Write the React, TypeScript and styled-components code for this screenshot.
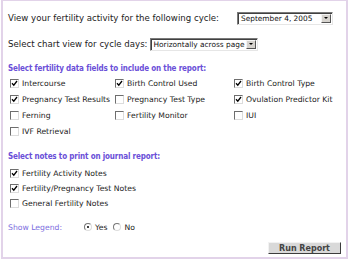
import React from 'react';
import styled, { createGlobalStyle } from 'styled-components';

const GlobalStyle = createGlobalStyle`
  html, body {
    margin: 0;
    padding: 0;
    background: #ffffff;
  }
  body {
    font-family: "DejaVu Sans", Verdana, sans-serif;
    font-size: 7.7px;
    color: #222222;
  }
`;

const Panel = styled.div`
  box-sizing: border-box;
  width: 347px;
  height: 259px;
  margin: 0 0 0 1px;
  border: 2px solid #e2d3e9;
  border-top-width: 1px;
  padding: 10px 5px 0 5px;
  display: flex;
  flex-direction: column;
`;

const Row = styled.div<{ $gap?: number; $mt?: number }>`
  display: flex;
  align-items: center;
  gap: ${(p) => p.$gap ?? 2}px;
  margin-top: ${(p) => p.$mt ?? 0}px;
  height: 14px;
  font-size: 8.6px;
`;

const Label = styled.span<{ $width?: number }>`
  white-space: nowrap;
  ${(p) => (p.$width ? `width: ${p.$width}px;` : '')}
`;

const SelectBox = styled.div<{ $width: number }>`
  box-sizing: border-box;
  width: ${(p) => p.$width}px;
  height: 13px;
  display: flex;
  align-items: center;
  justify-content: space-between;
  background: #ffffff;
  border: 1px solid;
  border-color: #7a7a7a #e6e6e6 #e6e6e6 #7a7a7a;
  box-shadow: inset 1px 1px 0 #404040;
  padding: 0 1px 0 3px;
  font-size: 7.4px;
  white-space: nowrap;
  overflow: hidden;
  color: #111;
`;

const ArrowBtn = styled.span`
  box-sizing: border-box;
  flex: none;
  width: 10px;
  height: 9px;
  background: #d6d3ce;
  border: 1px solid;
  border-color: #f4f4f4 #555 #555 #f4f4f4;
  display: flex;
  align-items: center;
  justify-content: center;
  &::after {
    content: '';
    border-left: 2px solid transparent;
    border-right: 2px solid transparent;
    border-top: 2px solid #000;
  }
`;

const Heading = styled.div<{ $mt: number }>`
  margin-top: ${(p) => p.$mt}px;
  color: #6a4fd8;
  font-family: "DejaVu Sans Condensed", "DejaVu Sans", sans-serif;
  font-weight: bold;
  font-size: 8px;
  letter-spacing: -0.15px;
  white-space: nowrap;
`;

const FieldGrid = styled.div`
  display: grid;
  grid-template-columns: 105px 119px 1fr;
  grid-auto-rows: 16px;
  margin-top: 2px;
  padding-left: 2px;
`;

const NotesList = styled.div`
  display: grid;
  grid-auto-rows: 15px;
  margin-top: 5px;
  padding-left: 2px;
`;

const Option = styled.label`
  display: flex;
  align-items: center;
  gap: 3px;
  white-space: nowrap;
`;

const Box = styled.span`
  box-sizing: border-box;
  flex: none;
  width: 9px;
  height: 9px;
  border: 1px solid;
  border-color: #6e6e6e #dcdcdc #dcdcdc #6e6e6e;
  background: #ffffff;
  display: flex;
  align-items: center;
  justify-content: center;
`;

const LegendRow = styled.div`
  display: flex;
  align-items: center;
  margin-top: 9px;
  height: 14px;
`;

const LegendLabel = styled.span`
  color: #7d6ee0;
  width: 76px;
`;

const Radio = styled.span<{ $on?: boolean }>`
  box-sizing: border-box;
  width: 8px;
  height: 8px;
  border-radius: 50%;
  border: 1px solid;
  border-color: #777 #ddd #ddd #777;
  background: #fff;
  display: flex;
  align-items: center;
  justify-content: center;
  margin-right: 3px;
  &::after {
    content: '';
    width: 2px;
    height: 2px;
    border-radius: 50%;
    background: ${(p) => (p.$on ? '#000' : 'transparent')};
  }
`;

const RadioText = styled.span`
  margin-right: 6px;
`;

const Footer = styled.div`
  display: flex;
  justify-content: flex-end;
  margin-top: 8px;
`;

const RunButton = styled.button`
  box-sizing: border-box;
  width: 73px;
  height: 12px;
  padding: 0;
  font-family: "DejaVu Sans", Verdana, sans-serif;
  font-size: 8px;
  font-weight: bold;
  color: #444;
  background: #d9d9d9;
  border: 1px solid;
  border-color: #f2f2f2 #3c3c3c #3c3c3c #f2f2f2;
`;

const Check = () => (
  <svg width="7" height="7" viewBox="0 0 7 7">
    <path d="M1 3.2 L2.8 5.2 L6 1" fill="none" stroke="#000" strokeWidth="1.3" />
  </svg>
);

const CheckOption: React.FC<{ label: string; checked?: boolean }> = ({ label, checked }) => (
  <Option>
    <Box>{checked && <Check />}</Box>
    <span>{label}</span>
  </Option>
);

const fields: [string, boolean][] = [
  ['Intercourse', true],
  ['Birth Control Used', true],
  ['Birth Control Type', true],
  ['Pregnancy Test Results', true],
  ['Pregnancy Test Type', false],
  ['Ovulation Predictor Kit', true],
  ['Ferning', false],
  ['Fertility Monitor', false],
  ['IUI', false],
  ['IVF Retrieval', false],
];

const notes: [string, boolean][] = [
  ['Fertility Activity Notes', true],
  ['Fertility/Pregnancy Test Notes', true],
  ['General Fertility Notes', false],
];

export default function App() {
  return (
    <>
      <GlobalStyle />
      <Panel>
        <Row $gap={0}>
          <Label $width={229}>View your fertility activity for the following cycle:</Label>
          <SelectBox $width={96}>
            September 4, 2005
            <ArrowBtn />
          </SelectBox>
        </Row>
        <Row $mt={12}>
          <Label>Select chart view for cycle days:</Label>
          <SelectBox $width={108}>
            Horizontally across page
            <ArrowBtn />
          </SelectBox>
        </Row>
        <Heading $mt={13}>Select fertility data fields to include on the report:</Heading>
        <FieldGrid>
          {fields.map(([label, checked]) => (
            <CheckOption key={label} label={label} checked={checked} />
          ))}
        </FieldGrid>
        <Heading $mt={13}>Select notes to print on journal report:</Heading>
        <NotesList>
          {notes.map(([label, checked]) => (
            <CheckOption key={label} label={label} checked={checked} />
          ))}
        </NotesList>
        <LegendRow>
          <LegendLabel>Show Legend:</LegendLabel>
          <Radio $on />
          <RadioText>Yes</RadioText>
          <Radio />
          <RadioText>No</RadioText>
        </LegendRow>
        <Footer>
          <RunButton>Run Report</RunButton>
        </Footer>
      </Panel>
    </>
  );
}
